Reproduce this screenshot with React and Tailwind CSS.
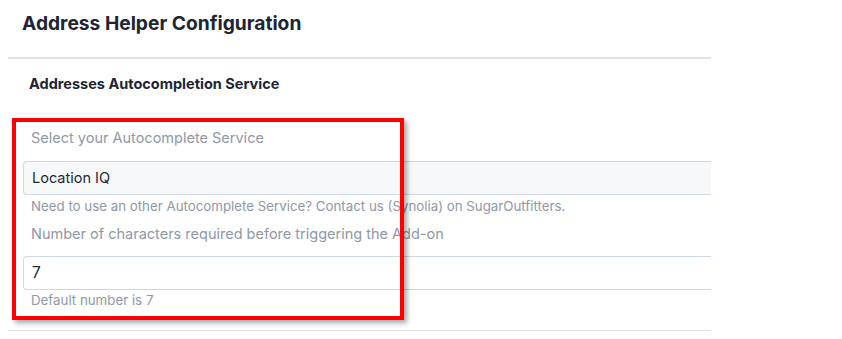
export default function App() {
  return (
    <div className="w-[842px] h-[339px] bg-white overflow-hidden font-['Inter',sans-serif] text-[#1f2937]">
      <div className="relative w-[703px] ml-[8px]">
        {/* Header */}
        <div className="h-[59px] pl-[14px] pt-[11px] border-b-[2px] border-[#dde3ec]">
          <h1 className="text-[19.2px] leading-[24px] font-bold text-[#1c2533]">Address Helper Configuration</h1>
        </div>

        {/* Section */}
        <div className="pt-[16px] pl-[21px]">
          <h2 className="text-[14.5px] leading-[18px] font-bold text-[#1c2533]">Addresses Autocompletion Service</h2>
        </div>

        <div className="pt-[35px] pl-[15px] pb-[21px] border-b border-[#dde3ec]">
          <label className="block pl-[8px] text-[14.5px] leading-[20px] text-[#8f98a6]">Select your Autocomplete Service</label>
          <div className="mt-[13px] h-[34px] flex items-center pl-[8px] bg-[#f6f8fa] border border-r-0 border-[#cfd8e4] rounded-l-[4px] text-[14.5px] text-[#1f2937]">
            Location IQ
          </div>
          <p className="mt-[2px] pl-[8px] text-[13.3px] leading-[18px] text-[#8f98a6]">
            Need to use an other Autocomplete Service? Contact us (Synolia) on SugarOutfitters.
          </p>
          <label className="block mt-[9px] pl-[8px] text-[14.5px] leading-[20px] text-[#8f98a6]">
            Number of characters required before triggering the Add-on
          </label>
          <div className="mt-[12px] h-[34px] flex items-center pl-[8px] bg-white border border-r-0 border-[#cfd8e4] rounded-l-[4px] text-[15.5px] text-[#1f2937]">
            7
          </div>
          <p className="mt-[1px] pl-[8px] text-[13.3px] leading-[18px] text-[#8f98a6]">Default number is 7</p>
        </div>

        {/* Annotation box */}
        <div className="absolute left-[4px] top-[118px] w-[392px] h-[202px] border-[4px] border-[#ff0000] shadow-[3px_3px_5px_rgba(0,0,0,0.35)]" />
      </div>
    </div>
  )
}
